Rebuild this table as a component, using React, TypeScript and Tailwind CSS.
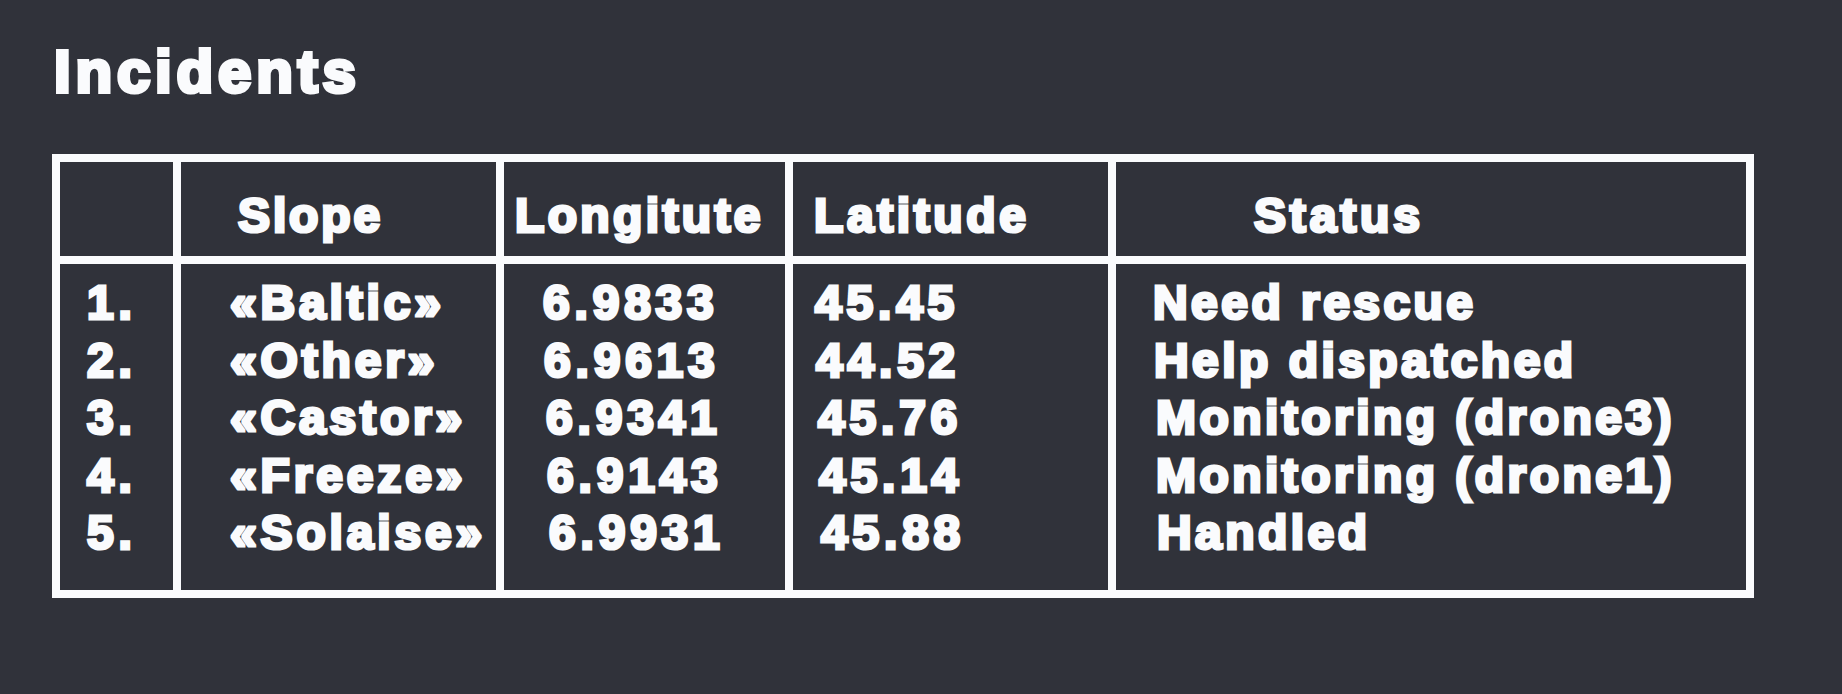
const incidents = [
  { n: "1.", slope: "«Baltic»", lon: "6.9833", lat: "45.45", status: "Need rescue" },
  { n: "2.", slope: "«Other»", lon: "6.9613", lat: "44.52", status: "Help dispatched" },
  { n: "3.", slope: "«Castor»", lon: "6.9341", lat: "45.76", status: "Monitoring (drone3)" },
  { n: "4.", slope: "«Freeze»", lon: "6.9143", lat: "45.14", status: "Monitoring (drone1)" },
  { n: "5.", slope: "«Solaise»", lon: "6.9931", lat: "45.88", status: "Handled" },
];

// the rows drift a few px to the right going down, like in the slide
const coordShift = ["pl-[0px]", "pl-[1px]", "pl-[3px]", "pl-[4px]", "pl-[6px]"];
const statusShift = ["pl-[0px]", "pl-[1px]", "pl-[3px]", "pl-[3px]", "pl-[4px]"];

const cell = "bg-[#30323a]";
const bold =
  "font-['Liberation_Sans',Arial,sans-serif] font-bold text-[#fafbfd] text-[48px] leading-[57.5px] [-webkit-text-stroke:3.2px_#fafbfd] whitespace-nowrap";

export default function App() {
  return (
    <div className="w-[1842px] h-[694px] bg-[#30323a] pl-[52px] pt-[42px]">
      <h1 className="pl-[2px] font-['Liberation_Sans',Arial,sans-serif] font-bold text-[60px] leading-[60px] tracking-[0.08em] text-[#fafbfd] [-webkit-text-stroke:4px_#fafbfd]">
        Incidents
      </h1>

      <div className="mt-[52px] w-[1702px] grid grid-cols-[113px_315px_281px_315px_630px] grid-rows-[94px_326px] gap-[8px] p-[8px] bg-[#fafbfd]">
        {/* header */}
        <div className={cell} />
        <div className={`${cell} ${bold} tracking-[0.06em] pt-[25px] pl-[57px]`}>Slope</div>
        <div className={`${cell} ${bold} tracking-[0.07em] pt-[25px] pl-[11px]`}>Longitute</div>
        <div className={`${cell} ${bold} tracking-[0.075em] pt-[25px] pl-[21px]`}>Latitude</div>
        <div className={`${cell} ${bold} tracking-[0.08em] pt-[25px] pl-[138px]`}>Status</div>

        {/* body */}
        <div className={`${cell} ${bold} tracking-[0.1em] pt-[10px] pl-[27px] flex flex-col`}>
          {incidents.map((r) => (
            <span key={r.n}>{r.n}</span>
          ))}
        </div>
        <div className={`${cell} ${bold} tracking-[0.08em] pt-[10px] pl-[49px] flex flex-col`}>
          {incidents.map((r) => (
            <span key={r.n}>{r.slope}</span>
          ))}
        </div>
        <div className={`${cell} ${bold} tracking-[0.1em] pt-[10px] pl-[39px] flex flex-col`}>
          {incidents.map((r, i) => (
            <span key={r.n} className={coordShift[i]}>
              {r.lon}
            </span>
          ))}
        </div>
        <div className={`${cell} ${bold} tracking-[0.1em] pt-[10px] pl-[22px] flex flex-col`}>
          {incidents.map((r, i) => (
            <span key={r.n} className={coordShift[i]}>
              {r.lat}
            </span>
          ))}
        </div>
        <div className={`${cell} ${bold} tracking-[0.072em] pt-[10px] pl-[37px] flex flex-col`}>
          {incidents.map((r, i) => (
            <span key={r.n} className={statusShift[i]}>
              {r.status}
            </span>
          ))}
        </div>
      </div>
    </div>
  );
}
